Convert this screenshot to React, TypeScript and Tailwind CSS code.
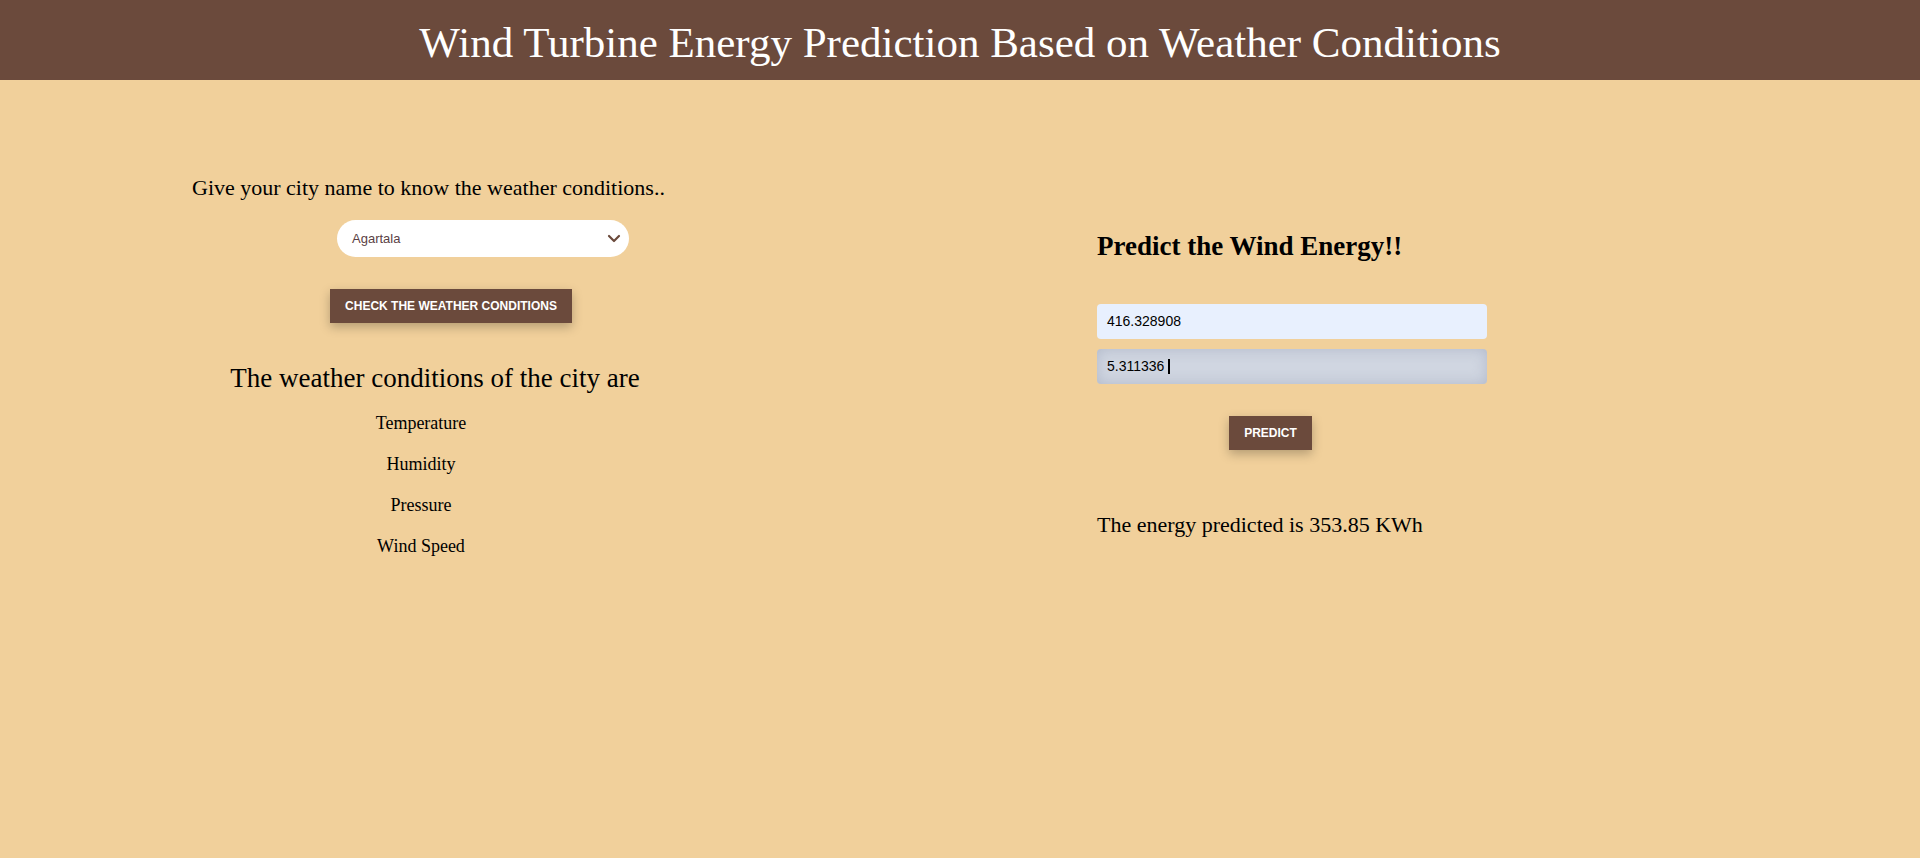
import React from 'react';

const serif = "font-['Liberation_Serif','Times_New_Roman',serif]";
const sans = "font-['Liberation_Sans',Arial,sans-serif]";

const ChevronDown = () => (
  <svg width="14" height="9" viewBox="0 0 14 9" fill="none" stroke="#6b4a3c" strokeWidth="2.2" strokeLinecap="round" strokeLinejoin="round">
    <polyline points="2 2 7 7 12 2"></polyline>
  </svg>
);

export default function App() {
  return (
    <div className={`min-h-screen w-full bg-[#f1d09b] ${serif}`}>
      {/* Header */}
      <div className="h-[80px] bg-[#6b4a3c] flex items-center justify-center">
        <h1 className="text-[43px] leading-none text-white pt-[4px]">
          Wind Turbine Energy Prediction Based on Weather Conditions
        </h1>
      </div>

      <div className="flex">
        {/* Left: weather */}
        <div className="w-[1097px] pl-[192px] pt-[95px]">
          <p className="text-[22px] leading-[25px] text-black">
            Give your city name to know the weather conditions..
          </p>

          <div className="ml-[145px] mt-[20px] w-[292px] h-[37px] bg-white rounded-full flex items-center justify-between pl-[15px] pr-[8px]">
            <span className={`${sans} text-[13px] text-[#5b3f45]`}>Agartala</span>
            <ChevronDown />
          </div>

          <div className={`ml-[138px] mt-[32px] w-[242px] h-[34px] bg-[#6b4a3c] shadow-[0_4px_10px_rgba(0,0,0,0.25)] flex items-center justify-center ${sans} text-[12px] font-bold text-white uppercase`}>
            Check the weather conditions
          </div>

          <h2 className="mt-[40px] w-[486px] text-center text-[27px] leading-[31px] text-black">
            The weather conditions of the city are
          </h2>

          <div className="mt-[9px] w-[458px] flex flex-col items-center text-[18px] leading-[41px] text-black">
            <p>Temperature</p>
            <p>Humidity</p>
            <p>Pressure</p>
            <p>Wind Speed</p>
          </div>
        </div>

        {/* Right: prediction */}
        <div className="pt-[151px]">
          <h2 className="text-[27px] leading-[30px] font-bold text-black">
            Predict the Wind Energy!!
          </h2>

          <div className={`mt-[43px] flex flex-col gap-[10px] ${sans} text-[14px] text-black`}>
            <div className="w-[390px] h-[35px] rounded-[4px] bg-[#e8f0fe] flex items-center pl-[10px]">
              416.328908
            </div>
            <div className="w-[390px] h-[35px] rounded-[4px] bg-[#d0d6e1] shadow-[inset_0_0_14px_rgba(110,120,150,0.3)] flex items-center pl-[10px]">
              5.311336
              <span className="ml-[4px] inline-block w-[2px] h-[15px] bg-black"></span>
            </div>
          </div>

          <div className={`ml-[132px] mt-[32px] w-[83px] h-[34px] bg-[#6b4a3c] shadow-[0_4px_10px_rgba(0,0,0,0.25)] flex items-center justify-center ${sans} text-[12px] font-bold text-white uppercase`}>
            Predict
          </div>

          <p className="mt-[63px] text-[22px] leading-[24px] text-black">
            The energy predicted is 353.85 KWh
          </p>
        </div>
      </div>
    </div>
  );
}
